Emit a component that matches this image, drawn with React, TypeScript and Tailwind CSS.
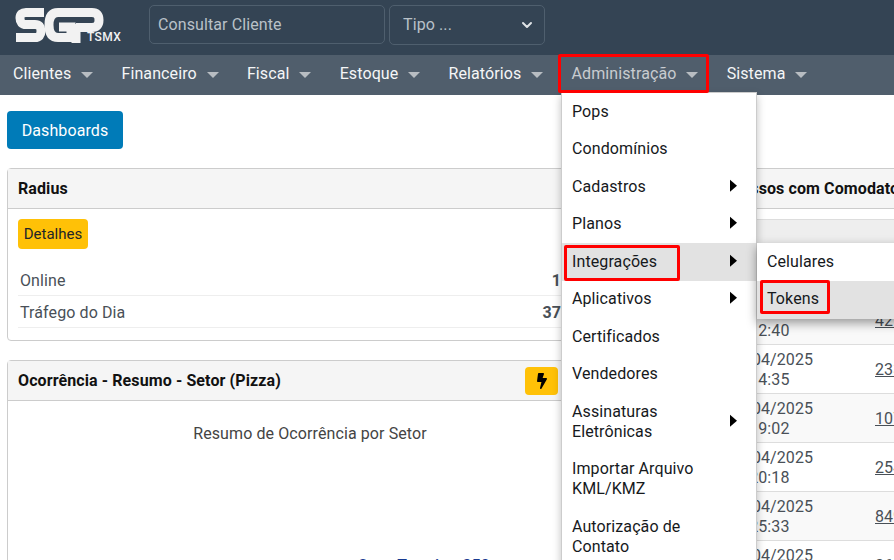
import { ChevronDown } from "lucide-react";
import { FaBolt } from "react-icons/fa";

const navItems = ["Clientes", "Financeiro", "Fiscal", "Estoque", "Relatórios", "Administração", "Sistema"];

const menuItems = [
  { label: "Pops" },
  { label: "Condomínios" },
  { label: "Cadastros", sub: true },
  { label: "Planos", sub: true },
  { label: "Integrações", sub: true, active: true },
  { label: "Aplicativos", sub: true },
  { label: "Certificados" },
  { label: "Vendedores" },
  { label: "Assinaturas Eletrônicas", sub: true },
  { label: "Importar Arquivo KML/KMZ" },
  { label: "Autorização de Contato" },
];

const rows = [
  { date: "10/04/2025", time: "10:12:20", code: "1187", striped: false },
  { date: "10/04/2025", time: "10:12:40", code: "4211", striped: true },
  { date: "10/04/2025", time: "10:14:35", code: "2331", striped: false },
  { date: "10/04/2025", time: "10:19:02", code: "1071", striped: true },
  { date: "10/04/2025", time: "10:20:18", code: "2541", striped: false },
  { date: "10/04/2025", time: "10:25:33", code: "8491", striped: true },
  { date: "10/04/2025", time: "10:30:11", code: "3611", striped: false },
];

function Logo() {
  return (
    <svg width="110" height="40" viewBox="15 5 110 40" fill="none" stroke="#f2f2f2" strokeWidth="9">
      <path d="M44 12.5H26Q20 12.5 20 18Q20 24.5 26 24.5H35Q41 24.5 41 31Q41 37.5 35 37.5H16" />
      <path d="M68 12.5H58Q49 12.5 49 25Q49 37.5 58 37.5H71V27H59" />
      <path d="M64 12.5H92Q99 12.5 99 20Q99 27.5 92 27.5H76" />
      <path d="M76 24V43" />
    </svg>
  );
}

export default function App() {
  return (
    <div className="relative h-[560px] w-[894px] overflow-hidden bg-white font-['Roboto',sans-serif] text-base tracking-[0.1px] text-[#495057]">
      {/* Header */}
      <header className="flex h-[55px] items-start bg-[#344454] pl-[15px] pt-[5px]">
        <div className="relative h-10 w-[134px]">
          <Logo />
          <span className="absolute left-[72px] top-[26px] text-[12px] font-medium leading-none tracking-[0.4px] text-[#f2f2f2]">TSMX</span>
        </div>
        <div className="flex h-[39px] w-[236px] items-center rounded-[5px] border border-[#4f5f6e] px-2 text-[#b9c1c8]">Consultar Cliente</div>
        <div className="ml-1 flex h-[40px] w-[156px] items-center justify-between rounded-[5px] border border-[#4f5f6e] pl-[13px] pr-[9px] text-[#b9c1c8]">
          Tipo ...
          <ChevronDown className="h-4 w-4 text-[#dfe3e6]" strokeWidth={3} />
        </div>
      </header>

      {/* Nav */}
      <nav className="flex h-10 items-center gap-[28.2px] bg-[#505e6c] pb-[3px] pl-[13px]">
        {navItems.map((item) => (
          <div key={item} className={`flex items-center gap-[10px] ${item === "Administração" ? "text-[#c8ccd0]" : "text-[#f5f6f7]"}`}>
            {item}
            <span className="mt-[2px] h-0 w-0 border-x-[6px] border-t-[6px] border-x-transparent border-t-[#b8bdc2]" />
          </div>
        ))}
      </nav>

      {/* Content */}
      <main className="px-[7px] pt-4">
        <button className="flex h-[38px] w-[116px] items-center justify-center rounded-[4px] bg-[#007bb8] pt-[2px] text-white">Dashboards</button>
        <div className="mt-[19px] flex gap-[9px]">
          <div className="w-[561px] shrink-0">
            <section className="h-[173px] rounded-[4px] border border-[#cccccc]">
              <h2 className="flex h-10 items-center border-b border-[#cccccc] bg-[#f5f5f5] px-[10px] font-bold text-[#111]">Radius</h2>
              <div className="pl-[10px] pr-[6px] pt-[10px]">
                <button className="flex h-[30px] w-[70px] items-center justify-center rounded-[4px] bg-[#ffc107] text-[15px] tracking-normal text-[#212529]">Detalhes</button>
                <div className="mt-[15px] flex h-8 items-center justify-between border-b border-[#eeeeee] pl-[2px] pt-[2px]">
                  Online <b className="font-bold">1</b>
                </div>
                <div className="flex h-8 items-center justify-between border-b border-[#eeeeee] pl-[2px] pt-[2px]">
                  Tráfego do Dia <b className="font-bold">37</b>
                </div>
              </div>
            </section>
            <section className="mt-[19px] h-[300px] rounded-[4px] border border-[#cccccc]">
              <div className="flex h-10 items-center justify-between border-b border-[#cccccc] bg-[#f5f5f5] pl-[10px] pr-[9px]">
                <h2 className="font-bold text-[#111]">Ocorrência - Resumo - Setor (Pizza)</h2>
                <button className="flex h-7 w-[33px] items-center justify-center rounded-[4px] bg-[#ffc107]">
                  <FaBolt className="h-4 w-[10px] text-black" />
                </button>
              </div>
              <p className="pl-[45px] pt-[21px] text-center text-[#444]">Resumo de Ocorrência por Setor</p>
              <p className="pl-[272px] pt-[108px] text-center font-medium text-[#17398f]">Casa Terreiro: 350</p>
            </section>
          </div>

          <section className="w-[500px] shrink-0 rounded-[4px] border border-[#cccccc]">
            <h2 className="flex h-10 items-center whitespace-nowrap border-b border-[#cccccc] bg-[#f5f5f5] pl-[84px] font-bold text-[#111]">Últimos Acessos com Comodato</h2>
            <div className="mt-[10px] h-[28px] border-y border-[#dddddd] bg-[#eeeeee]" />
            {rows.map((row) => (
              <div key={row.time} className={`flex h-[49px] items-center border-b border-[#dddddd] pl-[149px] pt-px ${row.striped ? "bg-[#f9f9f9]" : "bg-white"}`}>
                <div className="w-[148px] leading-5">
                  {row.date}
                  <br />
                  {row.time}
                </div>
                <a className="underline">{row.code}</a>
              </div>
            ))}
          </section>
        </div>
      </main>

      {/* Administração dropdown */}
      <div className="absolute left-[561px] top-[92px] w-[196px] border border-[#cccccc] bg-white text-[#16191c] shadow-[0_4px_8px_rgba(0,0,0,0.25)]">
        {menuItems.map((item) => (
          <div key={item.label} className={`relative py-[8.75px] pl-[10px] pr-[40px] leading-5 ${item.active ? "bg-[#e2e2e2]" : ""}`}>
            {item.label}
            {item.sub && <span className="absolute right-[19px] top-1/2 h-0 w-0 -translate-y-[60%] border-y-[6px] border-l-[7px] border-y-transparent border-l-black" />}
          </div>
        ))}
      </div>

      {/* Integrações submenu */}
      <div className="absolute left-[757px] top-[243px] w-[200px] bg-white text-[#16191c] shadow-[0_4px_10px_rgba(0,0,0,0.4)]">
        <div className="flex h-[38px] items-center pl-[10px]">Celulares</div>
        <div className="flex h-[38px] items-center bg-[#e2e2e2] pb-[3px] pl-[10px]">Tokens</div>
      </div>

      {/* Red annotation boxes */}
      <div className="absolute left-[558px] top-[54px] h-[39px] w-[151px] rounded-[2px] border-[3px] border-[#ff0000]" />
      <div className="absolute left-[564px] top-[245px] h-[36px] w-[116px] rounded-[2px] border-[3px] border-[#ff0000]" />
      <div className="absolute left-[760px] top-[280px] h-[34px] w-[70px] rounded-[2px] border-[3px] border-[#ff0000]" />
    </div>
  );
}
